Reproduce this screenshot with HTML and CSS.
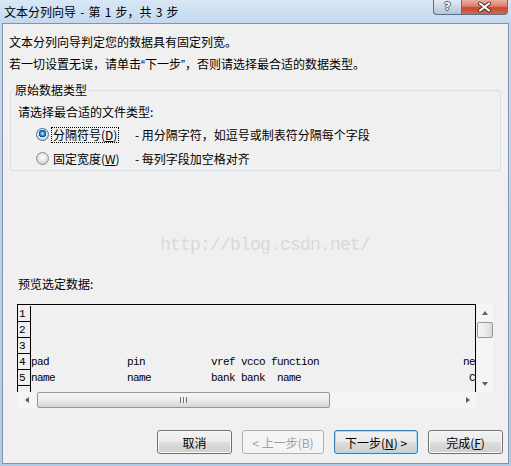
FILE: index.html
```html
<!DOCTYPE html>
<html lang="zh-CN">
<head>
    <meta charset="UTF-8">
    <title>文本分列向导 - 第 1 步，共 3 步</title>
    <link rel="stylesheet" href="styles.css">
</head>
<body>
<div class="window">
    <div class="titlebar">
        <span class="title">文本分列向导 - 第 1 步，共 3 步</span>
        <div class="caption-buttons">
            <span class="cap-btn help">?</span>
            <span class="cap-btn close">
                <svg width="45" height="14" viewBox="0 0 45 14">
                    <path d="M18 3.5 L27 10.5 M27 3.5 L18 10.5" stroke="#4a2a24" stroke-width="4" stroke-linecap="round"/>
                    <path d="M18 3.5 L27 10.5 M27 3.5 L18 10.5" stroke="#ffffff" stroke-width="2.2" stroke-linecap="round"/>
                </svg>
            </span>
        </div>
    </div>

    <div class="client">
        <div class="intro">
            <p>文本分列向导判定您的数据具有固定列宽。</p>
            <p>若一切设置无误，请单击<span class="q">“</span>下一步<span class="q">”</span>，否则请选择最合适的数据类型。</p>
        </div>

        <fieldset class="group">
            <legend>原始数据类型</legend>
            <div class="group-prompt">请选择最合适的文件类型:</div>
            <div class="option">
                <span class="radio checked"></span>
                <span class="opt-name"><span class="focus">分隔符号(<u>D</u>)</span></span>
                <span class="opt-desc">- 用分隔字符，如逗号或制表符分隔每个字段</span>
            </div>
            <div class="option">
                <span class="radio"></span>
                <span class="opt-name"><span>固定宽度(<u>W</u>)</span></span>
                <span class="opt-desc">- 每列字段加空格对齐</span>
            </div>
        </fieldset>

        <div class="watermark">http://blog.csdn.net/</div>

        <div class="preview-label">预览选定数据:</div>

        <div class="preview">
            <div class="data-box">
                <div class="row"><span class="num">1</span><span class="cells"></span></div>
                <div class="row"><span class="num">2</span><span class="cells"></span></div>
                <div class="row"><span class="num">3</span><span class="cells"></span></div>
                <div class="row"><span class="num">4</span><span class="cells">pad             pin           vref vcco function                        ne</span></div>
                <div class="row"><span class="num">5</span><span class="cells">name            name          bank bank  name                            C</span></div>
                <div class="row"><span class="num"></span><span class="cells"></span></div>
            </div>
            <div class="vscroll">
                <span class="sb-btn"><i class="arrow up"></i></span>
                <span class="vthumb"></span>
                <span class="sb-fill"></span>
                <span class="sb-btn"><i class="arrow down"></i></span>
            </div>
            <div class="hscroll">
                <span class="sb-btn wide"><i class="arrow left"></i></span>
                <span class="hthumb"><i class="grip"></i></span>
                <span class="sb-fill"></span>
                <span class="sb-btn"><i class="arrow right"></i></span>
            </div>
            <div class="corner"></div>
        </div>

        <div class="buttons">
            <button class="btn btn-cancel">取消</button>
            <button class="btn btn-back" disabled>&lt; 上一步(B)</button>
            <button class="btn btn-next default">下一步(<u>N</u>) &gt;</button>
            <button class="btn btn-finish">完成(<u>F</u>)</button>
        </div>
    </div>
</div>
</body>
</html>
```

FILE: styles.css
```css
body {
    margin: 0;
    font-family: "Noto Sans CJK SC", "Noto Sans", sans-serif;
    font-size: 12px;
    color: #000;
}
.window {
    width: 511px;
    height: 466px;
    display: flex;
    flex-direction: column;
    background: linear-gradient(180deg, #d8e7f6 0, #c3d9ef 23px, #afcbe8 100%);
}
.titlebar {
    height: 23px;
    flex: none;
    display: flex;
    justify-content: space-between;
    align-items: flex-start;
    padding: 0 3px 0 4px;
}
.title {
    line-height: 23px;
    font-size: 12px;
    word-spacing: 1.5px;
}
.caption-buttons {
    display: flex;
}
.cap-btn {
    height: 15px;
    box-sizing: border-box;
    border: 1px solid #607084;
    border-top: none;
    display: flex;
    align-items: center;
    justify-content: center;
}
.help {
    width: 28px;
    border-right: none;
    border-radius: 0 0 0 4px;
    background: linear-gradient(180deg, #e3ebf5 0, #cbd8e7 50%, #b5c6da 100%);
    color: #fff;
    font-family: "DejaVu Sans", sans-serif;
    font-weight: bold;
    font-size: 11px;
    line-height: 14px;
    text-shadow: 1px 0 0 #4b5a6e, -1px 0 0 #4b5a6e, 0 1px 0 #4b5a6e, 0 -1px 0 #4b5a6e;
}
.close {
    width: 47px;
    border-radius: 0 0 4px 0;
    background: linear-gradient(180deg, #eab0a2 0, #dc7d68 45%, #c8472f 55%, #d06a4e 100%);
}
.close svg {
    display: block;
}

.client {
    flex: 1;
    margin: 0 2px 2px 2px;
    border: 1px solid #8593a4;
    background: #f0f0f0;
}
.intro {
    padding: 7px 0 0 6px;
}
.intro p {
    margin: 0;
    line-height: 22px;
}
.q {
    font-family: "Liberation Sans", sans-serif;
}

.group {
    margin: 8px 7px 0;
    padding: 6px 7px 0;
    border: 1px solid #d5dfe5;
    border-radius: 3px;
    min-width: 0;
}
.group legend {
    margin-left: -4px;
    padding: 0 1px;
    line-height: 12px;
}
.group-prompt {
    line-height: 20px;
}
.option {
    height: 24px;
    display: flex;
    align-items: center;
    padding-left: 18px;
    white-space: nowrap;
}
.radio {
    width: 13px;
    height: 13px;
    flex: none;
    box-sizing: border-box;
    border: 1px solid #8c8f91;
    border-radius: 50%;
    background: radial-gradient(circle at 50% 40%, #ffffff 0, #e6e6e6 4px, #cfd2d4 6px);
}
.radio.checked {
    border-color: #4d6f8f;
    background:
        radial-gradient(circle at 50% 42%, #b9ecff 0, #3aa0e6 1.8px, #0d5cb0 3px, #0a4a8e 3.6px, transparent 4px),
        radial-gradient(circle at 50% 40%, #ffffff 0, #e9eef2 4px, #c8d3dc 6px);
}
.opt-name {
    width: 84px;
    flex: none;
    margin-left: 2px;
}
.opt-name span {
    display: inline-block;
    padding: 0 1px;
    line-height: 14px;
    border: 1px dotted transparent;
}
.opt-name .focus {
    border-color: #000;
}

.watermark {
    margin-top: 64px;
    padding-left: 157px;
    font-family: "Liberation Mono", monospace;
    font-size: 18px;
    letter-spacing: -0.8px;
    line-height: 20px;
    color: #d9d9d6;
}
.preview-label {
    margin-top: 20px;
    padding-left: 15px;
    line-height: 18px;
}

.preview {
    margin: 11px 0 0 14px;
    display: grid;
    grid-template-columns: 459px 17px;
    grid-template-rows: 88px 16px;
}
.data-box {
    border: 1px solid #000;
    border-bottom: none;
    padding-top: 1px;
    overflow: hidden;
    background: #f0f0f0;
}
.row {
    display: flex;
    height: 16px;
}
.num {
    width: 13px;
    flex: none;
    box-sizing: border-box;
    border-right: 1px solid #000;
    border-bottom: 1px solid #000;
    padding: 2px 0 0 1px;
    font-family: "Liberation Mono", monospace;
    font-size: 11px;
    line-height: 13px;
}
.row:last-child .num {
    border-bottom: none;
}
.cells {
    white-space: pre;
    overflow: hidden;
    font-family: "Liberation Mono", monospace;
    font-size: 11px;
    letter-spacing: -0.6px;
    line-height: 17px;
}

.vscroll,
.hscroll {
    display: flex;
    background: #f5f5f5;
}
.vscroll {
    flex-direction: column;
    margin-left: 1px;
}
.sb-btn {
    flex: none;
    width: 17px;
    height: 17px;
    display: flex;
    align-items: center;
    justify-content: center;
}
.vscroll .sb-btn {
    width: 16px;
}
.hscroll .sb-btn {
    height: 16px;
}
.sb-btn.wide {
    width: 19px;
}
.sb-fill {
    flex: 1;
}
.vthumb {
    margin-top: 1px;
    height: 16px;
    flex: none;
    box-sizing: border-box;
    border: 1px solid #979797;
    border-radius: 2px;
    background: linear-gradient(90deg, #f6f6f6 0, #ececec 50%, #d8d8d8 100%);
}
.hthumb {
    margin-left: 1px;
    width: 293px;
    flex: none;
    box-sizing: border-box;
    border: 1px solid #979797;
    border-radius: 2px;
    background: linear-gradient(180deg, #f6f6f6 0, #ececec 50%, #d6d6d6 100%);
    display: flex;
    align-items: center;
    justify-content: center;
}
.grip {
    width: 7px;
    height: 6px;
    background: repeating-linear-gradient(90deg, #707070 0 1px, #f8f8f8 1px 2px, transparent 2px 3px);
}
.arrow {
    width: 0;
    height: 0;
    border: 0 solid transparent;
}
.arrow.up {
    border-width: 0 3.5px 4px;
    border-bottom-color: #606060;
}
.arrow.down {
    border-width: 4px 3.5px 0;
    border-top-color: #606060;
}
.arrow.left {
    border-width: 3.5px 4px 3.5px 0;
    border-right-color: #606060;
}
.arrow.right {
    border-width: 3.5px 0 3.5px 4px;
    border-left-color: #606060;
}
.corner {
    background: #f0f0f0;
}

.buttons {
    margin-top: 22px;
    padding-right: 5px;
    display: flex;
    justify-content: flex-end;
    gap: 10px;
}
.btn {
    height: 24px;
    padding: 0;
    font-family: "Noto Sans CJK SC", "Noto Sans", sans-serif;
    font-size: 12px;
    color: #000;
    border: 1px solid #707070;
    border-radius: 3px;
    background: linear-gradient(180deg, #f2f2f2 0, #ebebeb 48%, #dddddd 52%, #cfcfcf 100%);
    box-shadow: inset 0 0 0 1px #fbfbfb;
}
.btn-cancel,
.btn-finish {
    width: 75px;
}
.btn-back {
    width: 82px;
    color: #a0a0a0;
    border-color: #adb2b5;
    background: #f4f4f4;
    box-shadow: none;
}
.btn-next {
    width: 84px;
}
.btn.default {
    border-color: #3c7fb1;
    box-shadow: inset 0 0 0 1px #9fdcf7;
}
```
